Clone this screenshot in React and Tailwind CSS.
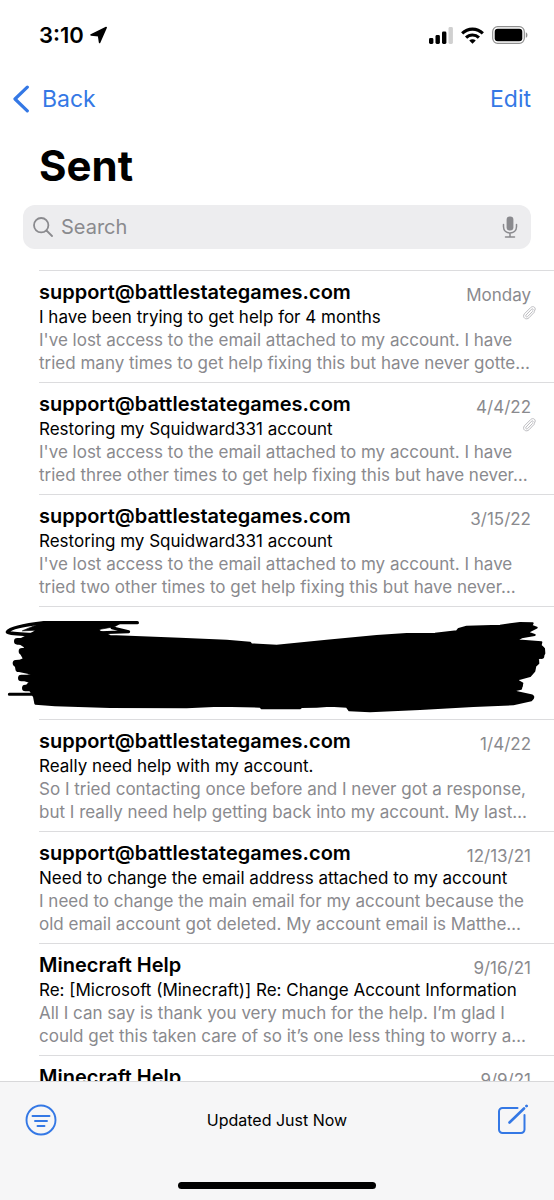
const messages = [
  {
    id: 1,
    from: "support@battlestategames.com",
    date: "Monday",
    attachment: true,
    subject: "I have been trying to get help for 4 months",
    preview: "I've lost access to the email attached to my account. I have\ntried many times to get help fixing this but have never gotte…",
  },
  {
    id: 2,
    from: "support@battlestategames.com",
    date: "4/4/22",
    attachment: true,
    subject: "Restoring my Squidward331 account",
    preview: "I've lost access to the email attached to my account. I have\ntried three other times to get help fixing this but have never…",
  },
  {
    id: 3,
    from: "support@battlestategames.com",
    date: "3/15/22",
    subject: "Restoring my Squidward331 account",
    preview: "I've lost access to the email attached to my account. I have\ntried two other times to get help fixing this but have never…",
  },
  { id: 4, redacted: true },
  {
    id: 5,
    from: "support@battlestategames.com",
    date: "1/4/22",
    subject: "Really need help with my account.",
    preview: "So I tried contacting once before and I never got a response,\nbut I really need help getting back into my account. My last…",
  },
  {
    id: 6,
    from: "support@battlestategames.com",
    date: "12/13/21",
    subject: "Need to change the email address attached to my account",
    preview: "I need to change the main email for my account because the\nold email account got deleted. My account email is Matthe…",
  },
  {
    id: 7,
    from: "Minecraft Help",
    date: "9/16/21",
    subject: "Re: [Microsoft (Minecraft)] Re: Change Account Information",
    preview: "All I can say is thank you very much for the help. I’m glad I\ncould get this taken care of so it’s one less thing to worry a…",
  },
  {
    id: 8,
    from: "Minecraft Help",
    date: "9/9/21",
  },
];

function StatusBar() {
  return (
    <div className="flex h-[70px] shrink-0 items-center justify-between pr-[26px] pl-[39px]">
      <div className="flex items-center gap-1.5">
        <span className="text-[22px] leading-7 font-semibold">3:10</span>
        <svg width="18" height="18" viewBox="0 0 18 18" aria-hidden="true">
          <path d="M16.200 1.500 9.600 16.500 8.600 9.600 1 8.900z" fill="black" stroke="black" strokeWidth="1.600" strokeLinejoin="round" />
        </svg>
      </div>
      <div className="flex items-center gap-2">
        <svg width="24" height="17" viewBox="0 0 24 17" aria-hidden="true">
          <rect x="0" y="11" width="4.4" height="6" rx="1.400" />
          <rect x="6.500" y="8" width="4.4" height="9" rx="1.400" />
          <rect x="13" y="4.500" width="4.4" height="12.500" rx="1.400" />
          <rect x="19.500" y="0" width="4.4" height="17" rx="1.400" fill="#d0d0d0" />
        </svg>
        <svg width="23" height="17" viewBox="0 0 24 17" fill="none" stroke="black" strokeWidth="3.2" aria-hidden="true">
          <path d="M1.200 6.300a15.400 15.400 0 0 1 21.600 0" />
          <path d="M5.300 10.700a9.500 9.500 0 0 1 13.400 0" />
          <path d="M8.600 13.800a4.800 4.800 0 0 1 6.800 0L12 17z" fill="black" stroke="none" />
        </svg>
        <svg width="36" height="18" viewBox="0 0 36 18" aria-hidden="true">
          <rect x="0.700" y="0.700" width="31.600" height="16.600" rx="5" fill="none" stroke="#8f8f8f" strokeWidth="1.200" />
          <rect x="2.700" y="2.700" width="27.600" height="12.600" rx="3" />
          <path d="M33.800 6.200c2.200.8 2.200 4.800 0 5.600z" fill="#8f8f8f" />
        </svg>
      </div>
    </div>
  );
}

function Paperclip() {
  return (
    <svg className="-mr-1.5" width="15" height="16" viewBox="0 0 15 16" fill="none" stroke="#bcbcc0" strokeLinecap="round" strokeLinejoin="round" role="img" aria-label="Attachment">
      <path d="M10.400 5.600 5.800 10.400c-1.300 1.300-2.900-.1-1.700-1.400l5.600-5.900c.9-.9 2.100.2 1.200 1.200" />
      <path d="M12 6.500 7.100 11.700c-2.900 2.900-7.400-.3-4.700-3.900l6.300-6.300c2.500-2.300 6.300.4 3.800 3.400z" />
    </svg>
  );
}

function Scribble() {
  return (
    <svg className="block h-28 w-full" viewBox="0 21 1662 336" preserveAspectRatio="none" stroke="black" strokeLinecap="round" strokeLinejoin="round" role="img" aria-label="Hidden message">
      <path
        d="M100 98 110 90 280 86 330 108 540 116 680 122 750 128 754 133 830 137 980 122 1130 108 1220 102 1305 101 1370 94 1376 87 1400 80 1500 77 1560 69 1598 70 1594 77 1610 83 1582 97 1604 105 1565 112 1548 121 1624 127 1622 136 1632 146 1633 160 1626 170 1614 176 1615 190 1606 198 1603 213 1590 228 1560 236 1550 240 1567 250 1563 266 1535 273 1590 285 1600 291 1594 301 1540 313 1420 318 1260 327 1110 334 1048 331 1040 320 990 317 950 320 905 321 900 325 785 325 780 320 658 317 560 322 330 321 165 316 106 311 102 290 90 270 75 264 90 246 60 235 100 222 54 212 44 193 72 176 60 155 78 142 50 124z"
        strokeWidth="6"
      />
      <path d="M52 124h70M66 154h60M48 190l70-6M56 206h60M64 234h60M76 264h40" fill="none" strokeWidth="20" />
      <path d="M412 68H132C80 74 30 84 22 96c12 8 50 6 100 8" fill="none" strokeWidth="10" />
      <path d="M28 283h110M300 98l86-3-50-12" fill="none" strokeWidth="9" />
      <path d="M68 92 132 65h238l-26 15-44 8-6 14H90l40-12z" strokeWidth="2" />
      <path d="M1624 148v20M1555 256h4M1585 292h8" fill="none" strokeWidth="18" />
    </svg>
  );
}

function MessageRow({ message }) {
  if (message.redacted) {
    return (
      <li>
        <div className="ml-[39px] h-px bg-[#dcdcde]" />
        <Scribble />
      </li>
    );
  }

  return (
    <li className="ml-[39px] h-28 border-t border-[#dcdcde] pt-2 pr-[23px]">
      <div className="flex items-center justify-between">
        <h2 className="text-xl leading-[27px] font-semibold">{message.from}</h2>
        <time className="pt-1 text-[17px] leading-[22px] text-[#8a8a8e]">{message.date}</time>
      </div>
      {message.subject && (
        <div className="flex items-start justify-between">
          <p className="text-[17px] leading-[23px] whitespace-nowrap">{message.subject}</p>
          {message.attachment && <Paperclip />}
        </div>
      )}
      {message.preview && (
        <p className="text-[17px] leading-[23px] whitespace-pre text-[#8a8a8e]">{message.preview}</p>
      )}
    </li>
  );
}

export default function App() {
  return (
    <div className="flex h-screen flex-col bg-white font-['Inter',sans-serif] text-black">
      <StatusBar />

      <header className="shrink-0">
        <nav className="flex h-[58px] items-center justify-between pr-[23px] pl-3 text-[23px] leading-7 text-[#3478e5]">
          <button type="button" className="flex cursor-pointer items-center gap-3">
            <svg width="18" height="28" viewBox="0 0 18 28" fill="none" stroke="currentColor" strokeWidth="3.200" strokeLinecap="round" strokeLinejoin="round" aria-hidden="true">
              <path d="M15.300 2.200 3 14l12.300 11.800" />
            </svg>
            Back
          </button>
          <button type="button" className="cursor-pointer">Edit</button>
        </nav>
        <h1 className="mt-2 pl-[39px] text-[42px] leading-[60px] font-bold">Sent</h1>
        <div className="mx-[23px] mt-[9px] mb-[21px] flex h-11 items-center gap-2 rounded-xl bg-[#ededef] pr-3 pl-2.5 text-[#8a8a8e]">
          <svg width="20" height="20" viewBox="0 0 20 20" fill="none" stroke="currentColor" strokeWidth="1.800" strokeLinecap="round" aria-hidden="true">
            <circle cx="8.200" cy="8.200" r="7.200" />
            <path d="m13.500 13.500 5.500 5.500" />
          </svg>
          <input
            type="search"
            aria-label="Search"
            placeholder="Search"
            className="min-w-0 flex-1 bg-transparent text-xl leading-7 outline-none placeholder:text-[#8a8a8e]"
          />
          <button type="button" aria-label="Dictate" className="cursor-pointer">
            <svg width="18" height="22" viewBox="0 0 18 22" fill="none" stroke="currentColor" strokeWidth="1.500" strokeLinecap="round" aria-hidden="true">
              <rect x="5.600" y="0.500" width="6.800" height="14" rx="3.200" fill="currentColor" stroke="none" />
              <path d="M2.500 8.500v2.300c0 8.200 13 8.200 13 0V8.500M9 17v4M4.500 21h9" />
            </svg>
          </button>
        </div>
      </header>

      <main className="min-h-0 flex-1 overflow-hidden">
        <ul>
          {messages.map((message) => (
            <MessageRow key={message.id} message={message} />
          ))}
        </ul>
      </main>

      <footer className="shrink-0 border-t border-[#d8d8da] bg-[#f6f6f7]">
        <div className="flex h-[76px] items-center justify-between px-[25px] text-[#3478e5]">
          <button type="button" aria-label="Filter" className="cursor-pointer">
            <svg width="32" height="32" viewBox="0 0 32 32" fill="none" stroke="currentColor" strokeWidth="1.900" strokeLinecap="round" aria-hidden="true">
              <circle cx="16" cy="16" r="14.500" />
              <path d="M7.500 12h17M10 17h12M12.500 22h7" />
            </svg>
          </button>
          <p className="text-base leading-5 text-black">Updated Just Now</p>
          <button type="button" aria-label="Compose" className="cursor-pointer">
            <svg width="32" height="32" viewBox="0 0 32 32" fill="none" stroke="currentColor" strokeWidth="2" strokeLinecap="round" strokeLinejoin="round" aria-hidden="true">
              <path d="M20.500 4H5.500A3.500 3.500 0 0 0 2 7.500v18A3.500 3.500 0 0 0 5.500 29H24a3.500 3.500 0 0 0 3.500-3.500V11" />
              <path d="M12.500 18.500 27 4.500" strokeWidth="2.600" />
              <path d="m29.500 2 .1-.1" strokeWidth="2.800" />
            </svg>
          </button>
        </div>
        <div className="flex h-[42px] justify-center pt-6">
          <div className="h-[7px] w-[198px] rounded-full bg-black" />
        </div>
      </footer>
    </div>
  );
}
